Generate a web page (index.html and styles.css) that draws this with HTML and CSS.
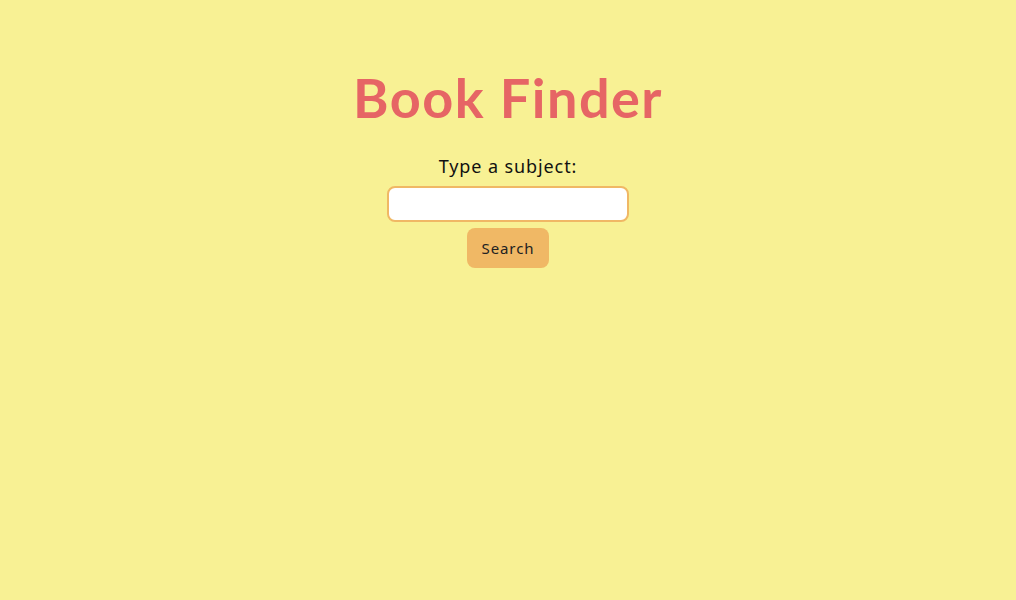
FILE: index.html
```html
<!DOCTYPE html>
<html>
<head>
<meta charset="utf-8">
<link rel="stylesheet" href="styles.css">
</head>
<body>
<main class="app">
  <h1 class="title">Book Finder</h1>
  <form class="search">
    <label class="label" for="subject">Type a subject:</label>
    <input class="field" id="subject" type="text">
    <button class="btn" type="button">Search</button>
  </form>
</main>
</body>
</html>
```
FILE: styles.css
```css
html, body {
  margin: 0;
  height: 100%;
  background: #f8f194;
}
body {
  font-family: "Noto Sans", "Open Sans", sans-serif;
  color: #111;
}
.app {
  display: flex;
  flex-direction: column;
  align-items: center;
  padding-top: 62px;
}
.title {
  margin: 0;
  font-family: "Lato", "Noto Sans", sans-serif;
  font-weight: 700;
  font-size: 54px;
  line-height: 72px;
  color: #e66565;
  letter-spacing: 1.5px;
}
.search {
  display: flex;
  flex-direction: column;
  align-items: center;
  margin-top: 20px;
}
.label {
  font-size: 18px;
  line-height: 24px;
  letter-spacing: 0.9px;
}
.field {
  box-sizing: border-box;
  width: 242px;
  height: 36px;
  margin-top: 8px;
  border: 2px solid #f0b865;
  border-radius: 8px;
  background: #fff;
  outline: none;
}
.btn {
  margin-top: 6px;
  width: 82px;
  height: 40px;
  border: none;
  border-radius: 8px;
  background: #f0b865;
  font-family: "Noto Sans", sans-serif;
  font-size: 15px;
  letter-spacing: 0.9px;
  color: #222;
  padding: 0;
}
```
